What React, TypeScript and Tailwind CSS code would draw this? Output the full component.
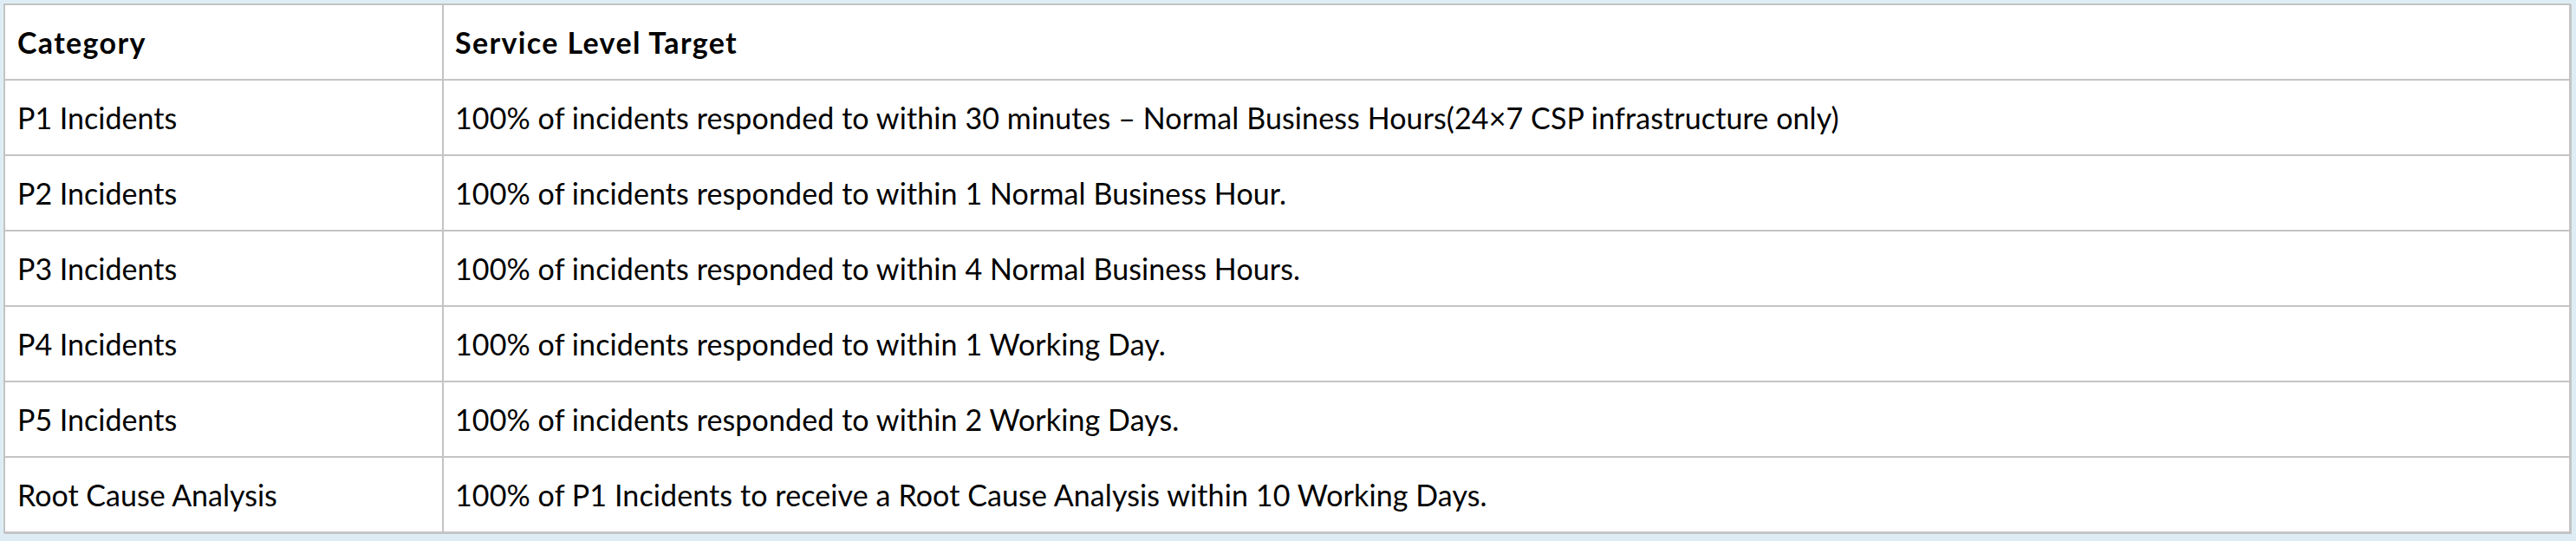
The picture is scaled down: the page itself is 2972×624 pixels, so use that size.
const rows: [string, string][] = [
  ["P1 Incidents", "100% of incidents responded to within 30 minutes – Normal Business Hours(24×7 CSP infrastructure only)"],
  ["P2 Incidents", "100% of incidents responded to within 1 Normal Business Hour."],
  ["P3 Incidents", "100% of incidents responded to within 4 Normal Business Hours."],
  ["P4 Incidents", "100% of incidents responded to within 1 Working Day."],
  ["P5 Incidents", "100% of incidents responded to within 2 Working Days."],
  ["Root Cause Analysis", "100% of P1 Incidents to receive a Root Cause Analysis within 10 Working Days."],
];

export default function App() {
  return (
    <div className="h-[624px] w-[2972px] bg-[#deedf5] p-1 font-['Lato',sans-serif] text-black">
      <table className="w-[2962px] border-collapse bg-white shadow-[1px_1px_0_#c4c4c4]">
        <thead>
          <tr className="h-[87px]">
            <th className="w-[506px] border-2 border-[#c4c4c4] px-[14px] text-left text-[34px] font-bold tracking-[0.04em]">Category</th>
            <th className="border-2 border-[#c4c4c4] px-[13px] text-left text-[34px] font-bold tracking-[0.04em]">Service Level Target</th>
          </tr>
        </thead>
        <tbody>
          {rows.map(([cat, target]) => (
            <tr key={cat} className="h-[87px]">
              <td className="border-2 border-[#c4c4c4] px-[14px] text-[34px]">{cat}</td>
              <td className="border-2 border-[#c4c4c4] px-[13px] text-[34px] tracking-[0.003em]">{target}</td>
            </tr>
          ))}
        </tbody>
      </table>
    </div>
  );
}
